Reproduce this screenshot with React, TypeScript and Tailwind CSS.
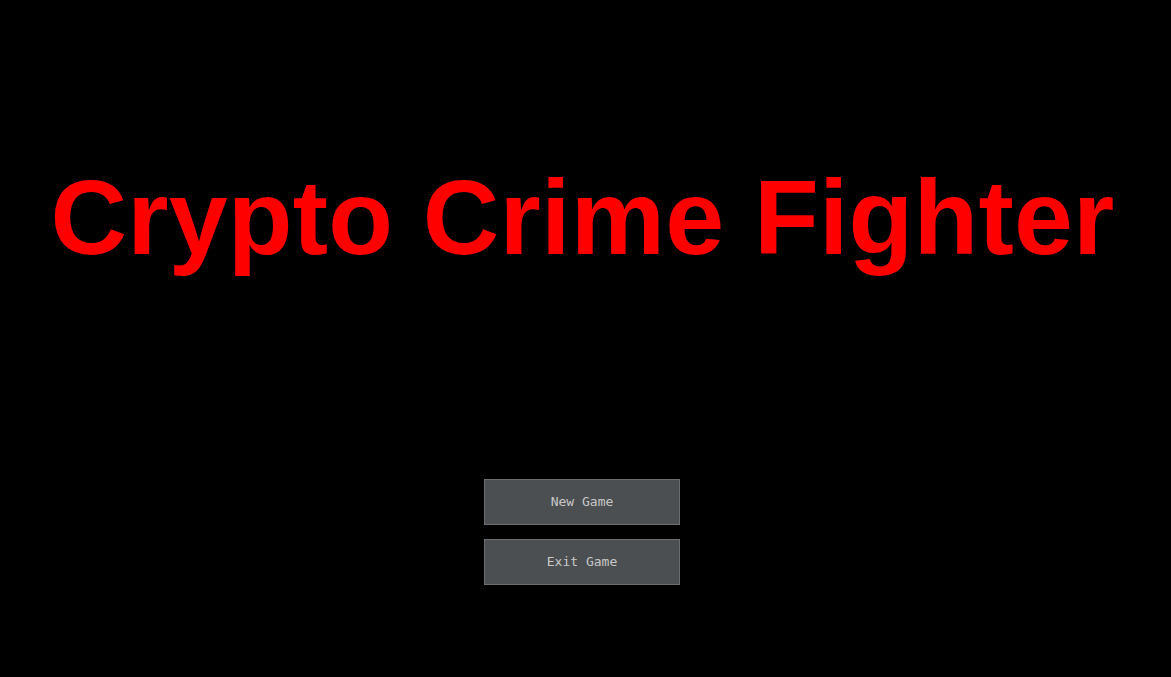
export default function App() {
  const buttons = ['New Game', 'Exit Game']

  return (
    <div className="h-[677px] w-full bg-black overflow-hidden flex flex-col items-center">
      {/* Title */}
      <h1
        className="mt-[164px] mr-[6px] text-[106px] leading-none font-bold tracking-[0.2px] text-[#ff0000] whitespace-nowrap"
        style={{ fontFamily: '"Liberation Sans", Arial, sans-serif' }}
      >
        Crypto Crime Fighter
      </h1>

      {/* Menu */}
      <div className="mt-[209px] flex flex-col gap-[14px] pr-[7px]">
        {buttons.map((label) => (
          <button
            key={label}
            className="w-[196px] h-[46px] bg-[#4b4f51] border border-[#6b6e70] text-[#c8c8c8] text-[13px]"
            style={{ fontFamily: '"DejaVu Sans Mono", monospace' }}
          >
            {label}
          </button>
        ))}
      </div>
    </div>
  )
}
